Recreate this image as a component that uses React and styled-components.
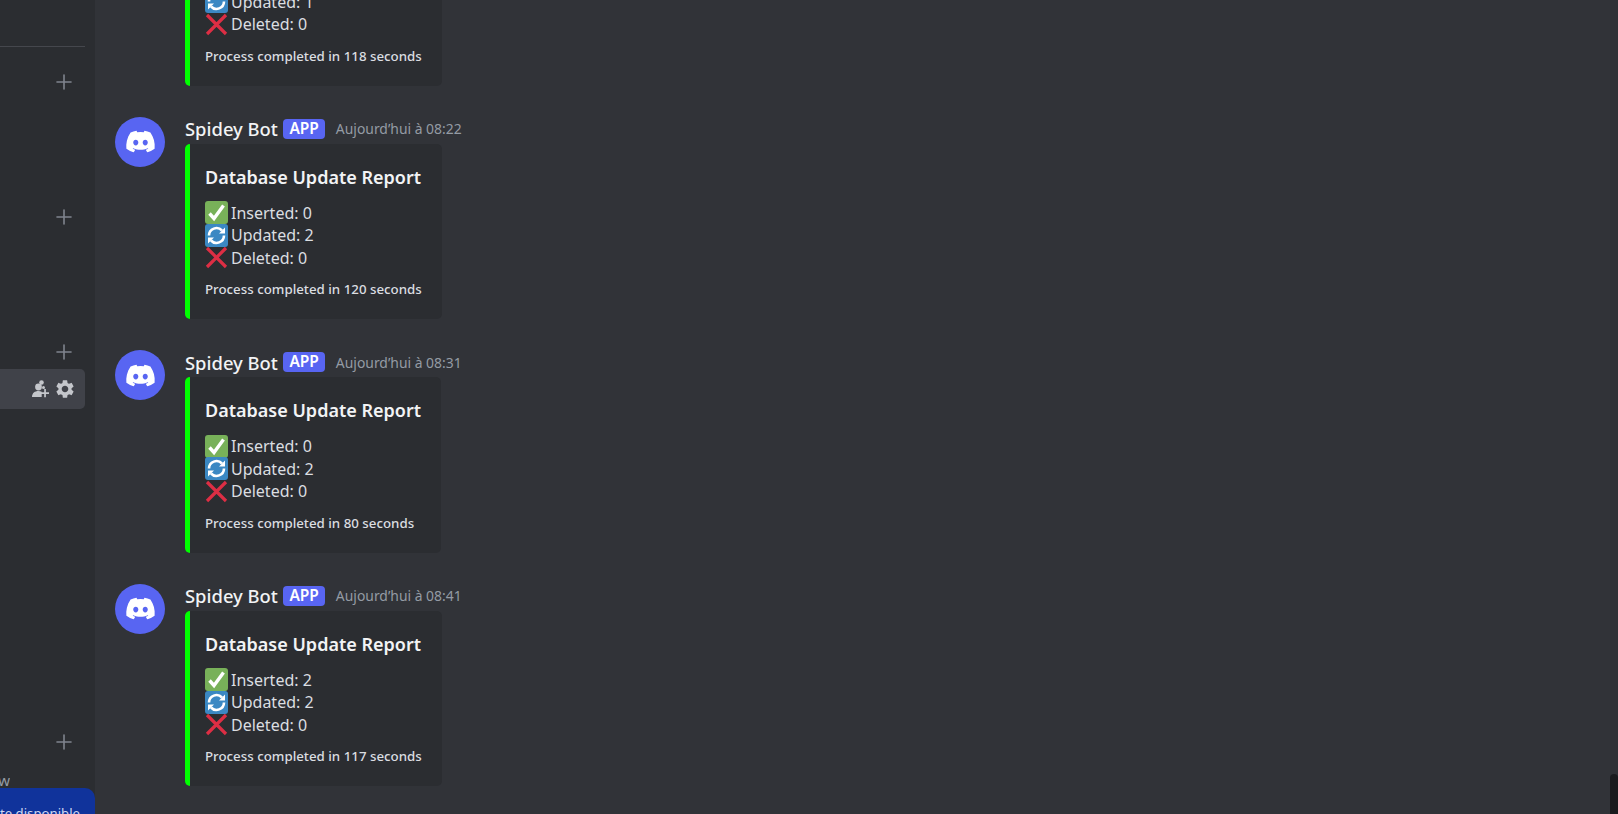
import React from 'react';
import styled, { createGlobalStyle } from 'styled-components';
import { FaDiscord } from 'react-icons/fa6';
import { Plus } from 'lucide-react';
import { MdSettings } from 'react-icons/md';

const GlobalStyle = createGlobalStyle`
    html, body {
        margin: 0;
        padding: 0;
        height: 100%;
        overflow: hidden;
        background: #313338;
    }
`;

const Page = styled.div`
    display: flex;
    height: 100vh;
    font-family: "Noto Sans", "Open Sans", sans-serif;
`;

const Sidebar = styled.aside`
    flex: 0 0 95px;
    display: flex;
    flex-direction: column;
    background: #2b2d31;
    overflow: hidden;
`;

const Divider = styled.div`
    width: 85px;
    height: 1px;
    margin-top: 46px;
    background: #45474d;
`;

const CategoryRow = styled.div`
    display: flex;
    justify-content: flex-end;
    align-items: center;
    width: 85px;
    height: 20px;
    margin-top: ${(p) => p.$top}px;
    padding-right: 9px;
    box-sizing: border-box;
    color: #80848e;
`;

const ChannelRow = styled.div`
    display: flex;
    justify-content: flex-end;
    align-items: center;
    gap: 3px;
    width: 85px;
    height: 40px;
    margin-top: 7px;
    padding-right: 9px;
    box-sizing: border-box;
    background: #404249;
    border-radius: 0 5px 5px 0;
    color: #c4c6cb;
`;

const SidebarFooter = styled.div`
    margin-top: auto;
    display: flex;
    flex-direction: column;
`;

const StatusText = styled.div`
    height: 36px;
    width: 10px;
    box-sizing: border-box;
    padding-top: 18px;
    display: flex;
    justify-content: flex-end;
    overflow: hidden;
    white-space: nowrap;
    font-size: 15px;
    line-height: 20px;
    color: #949ba4;
`;

const UpdateBanner = styled.div`
    display: flex;
    justify-content: flex-end;
    height: 26px;
    padding-right: 15px;
    overflow: hidden;
    white-space: nowrap;
    background: #10339b;
    border-top-right-radius: 10px;
    font-size: 13.2px;
    line-height: 50px;
    color: #cfd8f2;
`;

const Main = styled.main`
    flex: 1;
    min-width: 0;
    position: relative;
    display: flex;
    flex-direction: column;
    justify-content: flex-end;
    gap: 31px;
    padding: 0 0 28px 20px;
    overflow: hidden;
`;

const Message = styled.article`
    flex: none;
    display: flex;
    gap: 20px;
`;

const Avatar = styled.div`
    flex: none;
    display: flex;
    align-items: center;
    justify-content: center;
    width: 50px;
    height: 50px;
    border-radius: 50%;
    background: #5865f2;
    color: #fff;
`;

const Content = styled.div`
    display: flex;
    flex-direction: column;
    align-items: flex-start;
`;

const Header = styled.div`
    display: flex;
    align-items: center;
    height: 27px;
    padding-bottom: 3px;
    box-sizing: border-box;
`;

const Author = styled.span`
    font-size: 18.4px;
    font-weight: 500;
    color: #f2f3f5;
`;

const AppTag = styled.span`
    margin-left: 5px;
    padding: 0 6.5px;
    height: 20px;
    line-height: 19px;
    border-radius: 4px;
    background: #5865f2;
    color: #fff;
    font-size: 15.5px;
    font-weight: 600;
`;

const Timestamp = styled.time`
    margin-left: 10.5px;
    font-size: 13.9px;
    color: #949ba4;
`;

const Embed = styled.div`
    box-sizing: border-box;
    padding: 21px 20px 20px 15px;
    border-left: 5px solid #00ff00;
    border-radius: 5px;
    background: #2b2d31;
`;

const EmbedTitle = styled.div`
    font-size: 18px;
    line-height: 25px;
    font-weight: 600;
    color: #f2f3f5;
`;

const Stats = styled.div`
    margin-top: 12px;
`;

const StatRow = styled.div`
    display: flex;
    align-items: center;
    gap: 3px;
    height: 22.5px;
    font-size: 16px;
    color: #dbdee1;
`;

const EmbedFooter = styled.div`
    margin-top: 10px;
    font-size: 13.3px;
    line-height: 20px;
    font-weight: 500;
    color: #dbdee1;
`;

const Scrollbar = styled.div`
    position: absolute;
    top: 0;
    right: 0;
    bottom: 0;
    width: 8px;
    background: #2e3035;
`;

const ScrollThumb = styled.div`
    position: absolute;
    left: 0;
    right: 0;
    bottom: 0;
    height: 40px;
    border-radius: 4px 4px 0 0;
    background: #1a1b1e;
`;

const CheckEmoji = () => (
    <svg width="23" height="23" viewBox="0 0 23 23">
        <rect width="23" height="23" rx="3" fill="#78b159" />
        <path d="M4.500 12.500l4.500 5L18.500 4.500" fill="none" stroke="#fff" strokeWidth="3.400" />
    </svg>
);

const RefreshEmoji = () => (
    <svg width="23" height="23" viewBox="0 0 23 23">
        <rect width="23" height="23" rx="3" fill="#3b88c3" />
        <path d="M4 11.500a7.500 7.500 0 0 1 13-5" fill="none" stroke="#fff" strokeWidth="2.600" />
        <path d="M19 11.500a7.500 7.500 0 0 1-13 5" fill="none" stroke="#fff" strokeWidth="2.600" />
        <path d="M20 3.500v6h-6z M3 19.500v-6h6z" fill="#fff" />
    </svg>
);

const CrossEmoji = () => (
    <svg width="23" height="23" viewBox="0 0 23 23">
        <path d="M2 2l19 19M21 2L2 21" fill="none" stroke="#dd2e44" strokeWidth="3.200" />
    </svg>
);

const AddMemberIcon = () => (
    <svg width="20" height="20" viewBox="0 0 20 20" fill="currentColor">
        <circle cx="7.500" cy="8" r="3.400" />
        <path d="M1 18c0-4 2.800-6 6.500-6 1.200 0 2.300.2 3.200.7V18z" />
        <circle cx="10.500" cy="3.500" r="2.300" />
        <circle cx="12.500" cy="8.500" r="1.500" />
        <path d="M13.200 10h1.700v3.300h3.100V15h-3.100v3.300h-1.700V15H10v-1.700h3.200z" />
    </svg>
);

const messages = [
    { time: '08:12', inserted: 0, updated: 1, deleted: 0, seconds: 118 },
    { time: '08:22', inserted: 0, updated: 2, deleted: 0, seconds: 120 },
    { time: '08:31', inserted: 0, updated: 2, deleted: 0, seconds: 80 },
    { time: '08:41', inserted: 2, updated: 2, deleted: 0, seconds: 117 },
];

function App() {
    return (
        <Page>
            <GlobalStyle />
            <Sidebar>
                <Divider />
                <CategoryRow $top={25}>
                    <Plus size={24} strokeWidth={1.6} />
                </CategoryRow>
                <CategoryRow $top={115}>
                    <Plus size={24} strokeWidth={1.6} />
                </CategoryRow>
                <CategoryRow $top={115}>
                    <Plus size={24} strokeWidth={1.6} />
                </CategoryRow>
                <ChannelRow>
                    <AddMemberIcon />
                    <MdSettings size={22} />
                </ChannelRow>
                <SidebarFooter>
                    <CategoryRow $top={0}>
                        <Plus size={24} strokeWidth={1.6} />
                    </CategoryRow>
                    <StatusText>Preview</StatusText>
                    <UpdateBanner>Mise à jour complète disponible</UpdateBanner>
                </SidebarFooter>
            </Sidebar>
            <Main>
                {messages.map((m) => (
                    <Message key={m.time}>
                        <Avatar>
                            <FaDiscord size={31} />
                        </Avatar>
                        <Content>
                            <Header>
                                <Author>Spidey Bot</Author>
                                <AppTag>APP</AppTag>
                                <Timestamp>Aujourd’hui à {m.time}</Timestamp>
                            </Header>
                            <Embed>
                                <EmbedTitle>Database Update Report</EmbedTitle>
                                <Stats>
                                    <StatRow><CheckEmoji />Inserted: {m.inserted}</StatRow>
                                    <StatRow><RefreshEmoji />Updated: {m.updated}</StatRow>
                                    <StatRow><CrossEmoji />Deleted: {m.deleted}</StatRow>
                                </Stats>
                                <EmbedFooter>Process completed in {m.seconds} seconds</EmbedFooter>
                            </Embed>
                        </Content>
                    </Message>
                ))}
                <Scrollbar>
                    <ScrollThumb />
                </Scrollbar>
            </Main>
        </Page>
    );
}

export default App;
